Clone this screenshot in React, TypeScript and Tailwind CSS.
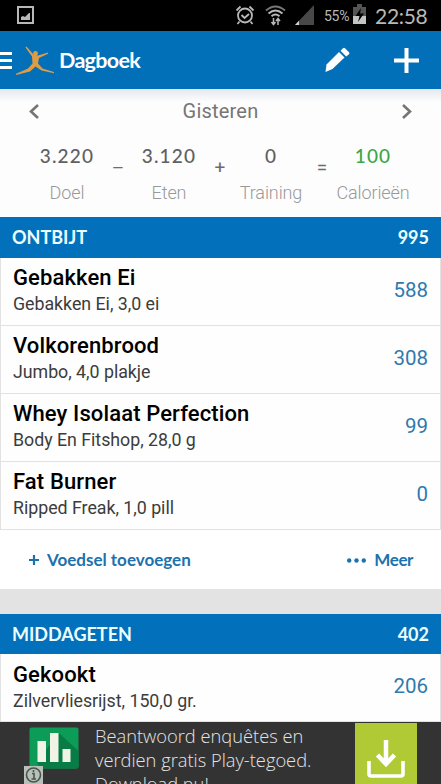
import { Fragment } from 'react';

type Food = { name: string; detail: string; kcal: number };

const breakfast: Food[] = [
    { name: 'Gebakken Ei', detail: 'Gebakken Ei, 3,0 ei', kcal: 588 },
    { name: 'Volkorenbrood', detail: 'Jumbo, 4,0 plakje', kcal: 308 },
    { name: 'Whey Isolaat Perfection', detail: 'Body En Fitshop, 28,0 g', kcal: 99 },
    { name: 'Fat Burner', detail: 'Ripped Freak, 1,0 pill', kcal: 0 },
];

const lunch: Food[] = [{ name: 'Gekookt', detail: 'Zilvervliesrijst, 150,0 gr.', kcal: 206 }];

const summary = [
    { value: '3.220', label: 'Doel', op: '–', color: 'text-[#606060]' },
    { value: '3.120', label: 'Eten', op: '+', color: 'text-[#606060]' },
    { value: '0', label: 'Training', op: '=', color: 'text-[#606060]' },
    { value: '100', label: 'Calorieën', op: '', color: 'text-[#3da648]' },
];

function StatusBar() {
    return (
        <div className="flex h-[31px] shrink-0 items-center bg-black pl-[17px] pr-[13px] text-[#b8b8b8]">
            {/* Screenshot */}
            <svg className="-mt-[1px]" width="17" height="18" viewBox="0 0 17 18">
                <rect x="1" y="1" width="15" height="16" fill="none" stroke="currentColor" strokeWidth="2" />
                <path d="M4 14v-3l2-1 2 1 4-4 1 0v7z" fill="currentColor" />
            </svg>

            {/* Alarm */}
            <svg className="-mt-[1px] ml-auto" width="20" height="20" viewBox="0 0 20 20" fill="none" stroke="currentColor" strokeWidth="1.8">
                <circle cx="10" cy="10.5" r="7" />
                <path d="M1.5 5.5l4-4M18.5 5.5l-4-4M4.5 16.5l-2 2.5M15.5 16.5l2 2.5M6.5 10l3 3 4.5-4" />
            </svg>

            {/* Wifi */}
            <svg className="-mt-[1px] ml-[10px]" width="21" height="21" viewBox="0 0 21 21" fill="none" stroke="currentColor" strokeWidth="1.9">
                <path d="M1 5.5q9.5-8 19 0" stroke="#777" />
                <path d="M3.5 8.5q7-6 14 0M6.5 11.2q4-3.4 8 0" />
                <path d="M8.5 13v6M6.5 17l2 2.5 2-2.5M13 20v-6M11 16l2-2.5 2 2.5" strokeWidth="1.5" />
            </svg>

            {/* Signal */}
            <svg className="-mt-[1px] ml-[9px]" width="19" height="20" viewBox="0 0 19 20">
                <path d="M19 0v20H0z" fill="#484848" />
                <path d="M4 15.8v4.2H0z" fill="#d0d0d0" />
            </svg>

            <span className="ml-[10px] w-[26px] whitespace-nowrap font-['Roboto',sans-serif] text-[14px] leading-none tracking-[-0.3px]">55%</span>

            {/* Battery */}
            <svg className="-mt-[2px] ml-[3px]" width="13" height="21" viewBox="0 0 13 21">
                <path d="M4 0h5v3h4v10H0V3h4z" fill="#555" />
                <path d="M0 12h13v8H0z" fill="#c4c4c4" />
                <path d="M8 4l-5.5 8h4l-1.5 6 6-8.5H7z" fill="#000" />
            </svg>

            <span className="-mt-[1px] ml-[9px] w-[53px] whitespace-nowrap font-['Lato',sans-serif] text-[21px] leading-none tracking-[-0.3px]">22:58</span>
        </div>
    );
}

function Header() {
    return (
        <header className="flex h-[58px] shrink-0 items-center bg-[#026fb9] pr-[22px] text-white">
            <div className="flex w-[12px] flex-col gap-[4px]">
                <div className="h-[3px] bg-white" />
                <div className="h-[3px] bg-white" />
                <div className="h-[3px] bg-white" />
            </div>

            {/* Logo */}
            <svg className="ml-[3px] mt-[1px]" width="40" height="30" viewBox="0 0 40 30" fill="#dc9c48">
                <circle cx="20.5" cy="7.5" r="2.4" />
                <path d="M10.5 1.5L11.5 0.5L18.5 8.5L23 9.5L33 6.5V7.8L24 12L23 17.5L27.5 22.5L39 26V27.2L26.5 24.5L20.5 20.5L15 25.5L1 29V27.8L13 22.5L17.5 17.5L17 10.5z" />
            </svg>

            <h1 className="ml-[4px] mt-[2px] font-['Lato',sans-serif] text-[21.5px] font-bold leading-none tracking-[-0.7px]">Dagboek</h1>

            {/* Edit */}
            <svg className="ml-auto" width="25" height="26" viewBox="0 0 25 26" fill="currentColor">
                <path d="M0.5 25l1-7.5L14 5l5.5 5.5L7.5 22z" />
                <path d="M15.5 3.8L18 1.3q1-1 2 0L24 5.2q1 1 0 2L21.2 9.5z" />
            </svg>

            {/* Add */}
            <svg className="ml-[44px]" width="25" height="25" viewBox="0 0 25 25" fill="currentColor">
                <path d="M10.5 0h4v10.5H25v4H14.5V25h-4V14.5H0v-4h10.5z" />
            </svg>
        </header>
    );
}

function Summary() {
    return (
        <section className="h-[128px] shrink-0 bg-gradient-to-b from-[#e4e8ee] via-[#fdfdfd] via-10% to-[#fdfdfd] font-['Roboto',sans-serif]">
            <div className="flex h-[44px] items-center justify-between px-[29px] text-[#757575]">
                <svg width="10" height="15" viewBox="0 0 10 15" fill="none" stroke="currentColor" strokeWidth="2.6">
                    <path d="M9 1L2 7.5 9 14" />
                </svg>
                <span className="text-[20px] tracking-[0.2px]">Gisteren</span>
                <svg width="10" height="15" viewBox="0 0 10 15" fill="none" stroke="currentColor" strokeWidth="2.6">
                    <path d="M1 1l7 6.5L1 14" />
                </svg>
            </div>
            <div className="flex pl-[24px] pt-[11px]">
                {summary.map((s) => (
                    <Fragment key={s.label}>
                        <div className="flex w-[86px] flex-col items-center whitespace-nowrap">
                            <span className={`font-['Lato',sans-serif] text-[19px] font-medium leading-[24px] tracking-[1.2px] ${s.color}`}>{s.value}</span>
                            <span className="mt-[13px] text-[18px] font-light leading-[24px] tracking-[-0.1px] text-[#999]">{s.label}</span>
                        </div>
                        {s.op && <span className="w-[16px] pt-[13px] text-center text-[19px] leading-[22px] text-[#6c6c6c]">{s.op}</span>}
                    </Fragment>
                ))}
            </div>
        </section>
    );
}

function MealTitle({ title, total }: { title: string; total: number }) {
    return (
        <div className="flex h-[40.5px] shrink-0 items-center justify-between bg-[#0270ba] px-[12px] pt-[1px] font-['Lato',sans-serif] text-[18px] font-bold text-[#ecffff]">
            <span>{title}</span>
            <span>{total}</span>
        </div>
    );
}

function FoodRow({ food }: { food: Food }) {
    return (
        <div className="flex h-[68px] shrink-0 items-center justify-between border-x border-b border-[#e2e2e2] bg-[#fefefe] px-[12px] font-['Roboto',sans-serif]">
            <div className="flex flex-col whitespace-nowrap">
                <span className="text-[22px] font-medium leading-[26px] tracking-[0.12px] text-black">{food.name}</span>
                <span className="text-[17.8px] leading-[26px] tracking-[-0.02px] text-[#3c3c3c]">{food.detail}</span>
            </div>
            <span className="pb-[2px] text-[20.5px] leading-none text-[#3079ae]">{food.kcal}</span>
        </div>
    );
}

function Actions() {
    return (
        <div className="flex h-[59px] shrink-0 items-center justify-between bg-white pl-[29px] pr-[28px] pt-[2px] font-['Lato',sans-serif] text-[17px] font-bold text-[#1b72ad]">
            <div className="flex items-center gap-[8px]">
                <svg width="10" height="10" viewBox="0 0 10 10" stroke="currentColor" strokeWidth="2.2">
                    <path d="M5 0v10M0 5h10" />
                </svg>
                <span>Voedsel toevoegen</span>
            </div>
            <div className="flex items-center gap-[8px]">
                <svg width="19" height="5" viewBox="0 0 19 5" fill="currentColor">
                    <circle cx="2.2" cy="2.5" r="2.2" />
                    <circle cx="9.5" cy="2.5" r="2.2" />
                    <circle cx="16.8" cy="2.5" r="2.2" />
                </svg>
                <span className="tracking-[-0.4px]">Meer</span>
            </div>
        </div>
    );
}

function AdBanner() {
    return (
        <div className="flex h-[62px] shrink-0 overflow-hidden bg-[#333] pl-[24px]">
            {/* App icon with the info badge */}
            <svg className="shrink-0" width="56" height="63" viewBox="0 0 56 63">
                <rect x="5.5" y="5.5" width="49" height="41" rx="2" fill="#0d9c58" />
                <path d="M35 11l19.5 18V44.5q0 2-2 2H15l-2-7z" fill="#087c45" />
                <path d="M13.5 19H22v21h-8.500zM26 11h8.500v29H26zM38.500 27h8v13h-8z" fill="#f1f3e5" />
                <rect x="0" y="44" width="19" height="19" fill="#b8c0b9" />
                <circle cx="9.5" cy="53" r="7" fill="none" stroke="#46564d" strokeWidth="1.6" />
                <path d="M8 51.5h2V57M7.5 57h4.500M9.500 48v2" fill="none" stroke="#46564d" strokeWidth="1.6" />
            </svg>
            <p className="ml-[15px] mt-[2px] whitespace-nowrap font-['Open_Sans',sans-serif] text-[18.3px] font-light leading-[24px] text-[#e4e4e4]">
                Beantwoord enquêtes en
                <br />
                verdien gratis Play-tegoed.
                <br />
                Download nu!
            </p>
            <div className="ml-auto mr-[24px] mt-[1px] flex h-[62px] w-[62px] justify-center bg-[#b0ca36] pt-[17px]">
                <svg width="38" height="39" viewBox="0 0 38 39" fill="none" stroke="#fff">
                    <path d="M19 0v22M10.5 15l8.5 9 8.5-9" strokeWidth="4.5" />
                    <path d="M2 21v13q0 2 2 2h30q2 0 2-2V21" strokeWidth="3.6" />
                </svg>
            </div>
        </div>
    );
}

export default function App() {
    return (
        <div className="flex h-[784px] w-[441px] flex-col overflow-hidden bg-white">
            <StatusBar />
            <Header />
            <Summary />
            <MealTitle title="ONTBIJT" total={995} />
            {breakfast.map((f) => (
                <FoodRow key={f.name} food={f} />
            ))}
            <Actions />
            <div className="h-[25px] shrink-0 bg-[#e3e3e3]" />
            <MealTitle title="MIDDAGETEN" total={402} />
            {lunch.map((f) => (
                <FoodRow key={f.name} food={f} />
            ))}
            <AdBanner />
        </div>
    );
}
